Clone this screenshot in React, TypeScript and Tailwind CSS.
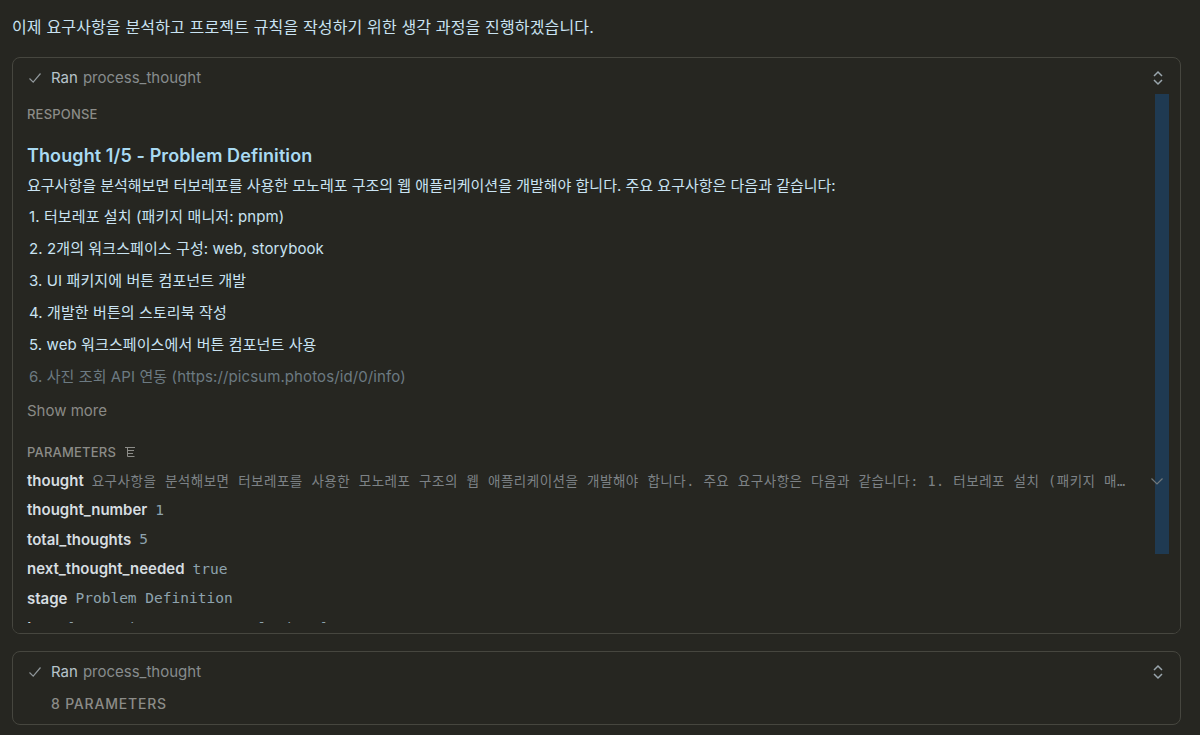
import React from "react";

const sans = { fontFamily: '"Inter", "Noto Sans CJK KR", sans-serif' };

function Check() {
  return (
    <svg width="14" height="14" viewBox="0 0 14 14" fill="none" stroke="#8f969a" strokeWidth="1.2">
      <path d="M1.5 7.5 L5.2 11.2 L12.5 2.5" />
    </svg>
  );
}

function UpDown() {
  return (
    <svg width="12" height="16" viewBox="0 0 12 16" fill="none" stroke="#9aa6ad" strokeWidth="1.5">
      <path d="M2 6 L6 2 L10 6" />
      <path d="M2 10 L6 14 L10 10" />
    </svg>
  );
}

function Header() {
  return (
    <div className="flex items-center h-[40px] pl-[15px] pr-[16px]">
      <Check />
      <span className="ml-[9px] text-[15px] text-[#b7c4cb]">Ran</span>
      <span className="ml-[5px] text-[15px] text-[#878c8d]">process_thought</span>
      <div className="ml-auto">
        <UpDown />
      </div>
    </div>
  );
}

const items = [
  "1. 터보레포 설치 (패키지 매니저: pnpm)",
  "2. 2개의 워크스페이스 구성: web, storybook",
  "3. UI 패키지에 버튼 컴포넌트 개발",
  "4. 개발한 버튼의 스토리북 작성",
  "5. web 워크스페이스에서 버튼 컴포넌트 사용",
];

const params: [string, string][] = [
  ["thought_number", "1"],
  ["total_thoughts", "5"],
  ["next_thought_needed", "true"],
  ["stage", "Problem Definition"],
];

const mono = { fontFamily: '"DejaVu Sans Mono", "Noto Sans CJK KR", monospace' };

export default function App() {
  return (
    <div className="w-[1200px] h-[735px] bg-[#262621] overflow-hidden" style={sans}>
      <div className="pt-[14px] pl-[12px] w-[1181px]">
        <p className="text-[16px] leading-[26px] text-[#c9e3f2] tracking-[0.15px]">
          이제 요구사항을 분석하고 프로젝트 규칙을 작성하기 위한 생각 과정을 진행하겠습니다.
        </p>
        <div className="relative mt-[17px] h-[577px] border border-[#46463f] rounded-[8px] flex flex-col overflow-hidden">
          <div className="absolute right-[11px] top-[36px] w-[14px] h-[460px] bg-[#1f3a52]" />
          <Header />
          <div className="relative flex-1 overflow-hidden">
            <div className="pl-[14px] pr-[40px]">
              <div className="pt-[7px] text-[13px] leading-[18px] tracking-[0.2px] text-[#8c8c88] font-medium">RESPONSE</div>
              <div className="mt-[21px] text-[18px] leading-[24px] font-semibold text-[#a9daf2] tracking-[0.1px]">
                Thought 1/5 - Problem Definition
              </div>
              <div className="mt-[7px] text-[15px] leading-[22px] text-[#c9e3f2]">
                요구사항을 분석해보면 터보레포를 사용한 모노레포 구조의 웹 애플리케이션을 개발해야 합니다. 주요 요구사항은 다음과 같습니다:
              </div>
              <div className="mt-[9px] flex flex-col gap-[10px]">
                {items.map((t) => (
                  <div key={t} className="pl-[2px] text-[15px] leading-[22px] text-[#c9e3f2] tracking-[0.1px]">{t}</div>
                ))}
                <div className="pl-[2px] text-[15px] leading-[22px] text-[#6c7a82] tracking-[0.1px]">
                  6. 사진 조회 API 연동 (https://picsum.photos/id/0/info)
                </div>
              </div>
              <div className="mt-[12px] text-[15px] leading-[22px] text-[#8a8a86]">Show more</div>
              <div className="mt-[21px] flex items-center gap-[8px]">
                <span className="text-[13px] leading-[18px] tracking-[0.2px] text-[#8c8c88] font-medium">PARAMETERS</span>
                <svg width="12" height="12" viewBox="0 0 12 12" fill="none" stroke="#8c8c88" strokeWidth="1">
                  <path d="M1 1.5 H11 M3.5 1.5 V10.5 M3.5 4.5 H10 M3.5 7.5 H9 M3.5 10.5 H10.5" />
                </svg>
              </div>
              <div className="mt-[9px] flex items-center h-[22px]">
                <span className="font-semibold text-[15px] text-[#d6dde0] shrink-0">thought</span>
                <span
                  className="ml-[8px] truncate text-[13.5px] text-[#7d8286] w-[1036px]"
                  style={{ ...mono, letterSpacing: "0.5px" }}
                >
                  요구사항을 분석해보면 터보레포를 사용한 모노레포 구조의 웹 애플리케이션을 개발해야 합니다. 주요 요구사항은 다음과 같습니다: 1. 터보레포 설치 (패키지 매니저: pnpm) 2. 2개의 워크스페이스 구성
                </span>
                <svg className="ml-auto mr-[-24px]" width="14" height="10" viewBox="0 0 14 10" fill="none" stroke="#6f787d" strokeWidth="1.2">
                  <path d="M1.5 2.5 L7 8 L12.5 2.5" />
                </svg>
              </div>
              {params.map(([k, v]) => (
                <div key={k} className="mt-[7.5px] flex items-center h-[22px]">
                  <span className="font-semibold text-[15px] text-[#d6dde0]">{k}</span>
                  <span className="ml-[8px] text-[14.5px] text-[#8ea3ae]" style={mono}>
                    {v}
                  </span>
                </div>
              ))}
              <div className="mt-[7.5px] flex items-center h-[22px]">
                <span className="font-semibold text-[15px] text-[#d6dde0]">tags</span>
                <span className="ml-[8px] text-[14.5px] text-[#8ea3ae]" style={mono}>
                  [ "requirements", "analysis" ]
                </span>
              </div>
            </div>
          </div>
          <div className="h-[10px] shrink-0 bg-[#262621]" />
        </div>
        <div className="mt-[17px] h-[74px] border border-[#46463f] rounded-[8px] flex flex-col">
          <Header />
          <div className="mt-[2px] pl-[38px] text-[14px] leading-[20px] tracking-[0.8px] text-[#8c8c88] font-medium">8 PARAMETERS</div>
        </div>
      </div>
    </div>
  );
}
